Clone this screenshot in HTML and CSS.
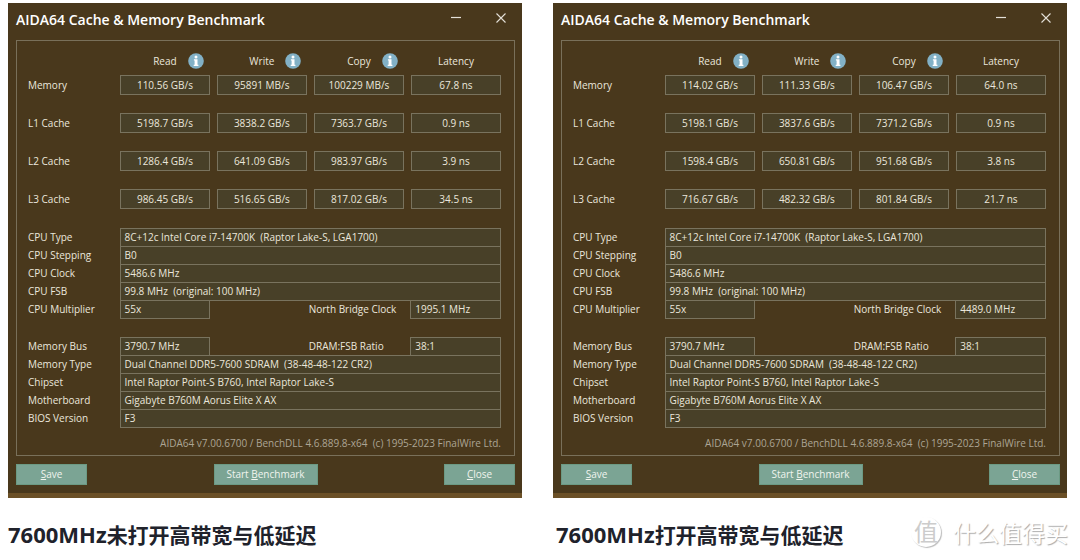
FILE: index.html
```html
<!DOCTYPE html>
<html lang="zh-CN">
<head>
<meta charset="utf-8">
<title>AIDA64 Cache &amp; Memory Benchmark</title>
<link rel="stylesheet" href="styles.css">
</head>
<body>
<svg class="defs" aria-hidden="true">
  <symbol id="info" viewBox="0 0 16 16">
    <circle cx="8" cy="8" r="7.8" fill="#82b1c6"/>
    <circle cx="8" cy="3.9" r="1.5" fill="#fff"/>
    <path d="M5.9 6.3h3.6v5.4h.9v1.3H5.7v-1.3h.9V7.6h-.7z" fill="#fff"/>
  </symbol>
  <symbol id="min" viewBox="0 0 12 12"><path d="M1 5.5h10" stroke="#e4e0d8" stroke-width="1.2"/></symbol>
  <symbol id="close" viewBox="0 0 12 12"><path d="M1.5 1.5l9 9M10.5 1.5l-9 9" stroke="#e4e0d8" stroke-width="1.1"/></symbol>
</svg>
<main class="compare">
  <figure class="result">
    <section class="window">
      <header class="titlebar">
        <h1 class="title">AIDA64 Cache &amp; Memory Benchmark</h1>
        <button class="sysbtn" aria-label="Minimize"><svg><use href="#min"/></svg></button>
        <button class="sysbtn" aria-label="Close"><svg><use href="#close"/></svg></button>
      </header>
      <div class="panel">
        <table class="bench">
          <colgroup><col class="c-label"><col class="c-first"><col><col><col></colgroup>
          <thead><tr><td></td>
            <th><div class="head"><span>Read</span><button class="info" aria-label="About Read"><svg><use href="#info"/></svg></button></div></th>
            <th><div class="head"><span>Write</span><button class="info" aria-label="About Write"><svg><use href="#info"/></svg></button></div></th>
            <th><div class="head"><span>Copy</span><button class="info" aria-label="About Copy"><svg><use href="#info"/></svg></button></div></th>
            <th><div class="head"><span>Latency</span></div></th></tr></thead>
          <tbody>
            <tr><th>Memory</th><td><div class="box">110.56 GB/s</div></td><td><div class="box">95891 MB/s</div></td><td><div class="box">100229 MB/s</div></td><td><div class="box">67.8 ns</div></td></tr>
            <tr><th>L1 Cache</th><td><div class="box">5198.7 GB/s</div></td><td><div class="box">3838.2 GB/s</div></td><td><div class="box">7363.7 GB/s</div></td><td><div class="box">0.9 ns</div></td></tr>
            <tr><th>L2 Cache</th><td><div class="box">1286.4 GB/s</div></td><td><div class="box">641.09 GB/s</div></td><td><div class="box">983.97 GB/s</div></td><td><div class="box">3.9 ns</div></td></tr>
            <tr><th>L3 Cache</th><td><div class="box">986.45 GB/s</div></td><td><div class="box">516.65 GB/s</div></td><td><div class="box">817.02 GB/s</div></td><td><div class="box">34.5 ns</div></td></tr>
          </tbody>
        </table>
        <table class="spec">
          <colgroup><col class="c-label"><col class="c-value"><col><col class="c-mid"><col class="c-value"></colgroup>
          <tbody>
            <tr><th>CPU Type</th><td class="v" colspan="4">8C+12c Intel Core i7-14700K&nbsp; (Raptor Lake-S, LGA1700)</td></tr>
            <tr><th>CPU Stepping</th><td class="v" colspan="4">B0</td></tr>
            <tr><th>CPU Clock</th><td class="v" colspan="4">5486.6 MHz</td></tr>
            <tr><th>CPU FSB</th><td class="v" colspan="4">99.8 MHz&nbsp; (original: 100 MHz)</td></tr>
            <tr><th>CPU Multiplier</th><td class="v">55x</td><td></td><th>North Bridge Clock</th><td class="v">1995.1 MHz</td></tr>
            <tr class="gap"><td colspan="5"></td></tr>
            <tr><th>Memory Bus</th><td class="v">3790.7 MHz</td><td></td><th>DRAM:FSB Ratio</th><td class="v">38:1</td></tr>
            <tr><th>Memory Type</th><td class="v" colspan="4">Dual Channel DDR5-7600 SDRAM&nbsp; (38-48-48-122 CR2)</td></tr>
            <tr><th>Chipset</th><td class="v" colspan="4">Intel Raptor Point-S B760, Intel Raptor Lake-S</td></tr>
            <tr><th>Motherboard</th><td class="v" colspan="4">Gigabyte B760M Aorus Elite X AX</td></tr>
            <tr><th>BIOS Version</th><td class="v" colspan="4">F3</td></tr>
          </tbody>
        </table>
        <p class="version">AIDA64 v7.00.6700 / BenchDLL 4.6.889.8-x64&nbsp; (c) 1995-2023 FinalWire Ltd.</p>
      </div>
      <footer class="actions">
        <button class="btn"><u>S</u>ave</button>
        <button class="btn btn-wide">Start <u>B</u>enchmark</button>
        <button class="btn"><u>C</u>lose</button>
      </footer>
    </section>
    <figcaption class="caption"><span class="latin">7600MHz</span>未打开高带宽与低延迟</figcaption>
  </figure>
  <figure class="result">
    <section class="window">
      <header class="titlebar">
        <h1 class="title">AIDA64 Cache &amp; Memory Benchmark</h1>
        <button class="sysbtn" aria-label="Minimize"><svg><use href="#min"/></svg></button>
        <button class="sysbtn" aria-label="Close"><svg><use href="#close"/></svg></button>
      </header>
      <div class="panel">
        <table class="bench">
          <colgroup><col class="c-label"><col class="c-first"><col><col><col></colgroup>
          <thead><tr><td></td>
            <th><div class="head"><span>Read</span><button class="info" aria-label="About Read"><svg><use href="#info"/></svg></button></div></th>
            <th><div class="head"><span>Write</span><button class="info" aria-label="About Write"><svg><use href="#info"/></svg></button></div></th>
            <th><div class="head"><span>Copy</span><button class="info" aria-label="About Copy"><svg><use href="#info"/></svg></button></div></th>
            <th><div class="head"><span>Latency</span></div></th></tr></thead>
          <tbody>
            <tr><th>Memory</th><td><div class="box">114.02 GB/s</div></td><td><div class="box">111.33 GB/s</div></td><td><div class="box">106.47 GB/s</div></td><td><div class="box">64.0 ns</div></td></tr>
            <tr><th>L1 Cache</th><td><div class="box">5198.1 GB/s</div></td><td><div class="box">3837.6 GB/s</div></td><td><div class="box">7371.2 GB/s</div></td><td><div class="box">0.9 ns</div></td></tr>
            <tr><th>L2 Cache</th><td><div class="box">1598.4 GB/s</div></td><td><div class="box">650.81 GB/s</div></td><td><div class="box">951.68 GB/s</div></td><td><div class="box">3.8 ns</div></td></tr>
            <tr><th>L3 Cache</th><td><div class="box">716.67 GB/s</div></td><td><div class="box">482.32 GB/s</div></td><td><div class="box">801.84 GB/s</div></td><td><div class="box">21.7 ns</div></td></tr>
          </tbody>
        </table>
        <table class="spec">
          <colgroup><col class="c-label"><col class="c-value"><col><col class="c-mid"><col class="c-value"></colgroup>
          <tbody>
            <tr><th>CPU Type</th><td class="v" colspan="4">8C+12c Intel Core i7-14700K&nbsp; (Raptor Lake-S, LGA1700)</td></tr>
            <tr><th>CPU Stepping</th><td class="v" colspan="4">B0</td></tr>
            <tr><th>CPU Clock</th><td class="v" colspan="4">5486.6 MHz</td></tr>
            <tr><th>CPU FSB</th><td class="v" colspan="4">99.8 MHz&nbsp; (original: 100 MHz)</td></tr>
            <tr><th>CPU Multiplier</th><td class="v">55x</td><td></td><th>North Bridge Clock</th><td class="v">4489.0 MHz</td></tr>
            <tr class="gap"><td colspan="5"></td></tr>
            <tr><th>Memory Bus</th><td class="v">3790.7 MHz</td><td></td><th>DRAM:FSB Ratio</th><td class="v">38:1</td></tr>
            <tr><th>Memory Type</th><td class="v" colspan="4">Dual Channel DDR5-7600 SDRAM&nbsp; (38-48-48-122 CR2)</td></tr>
            <tr><th>Chipset</th><td class="v" colspan="4">Intel Raptor Point-S B760, Intel Raptor Lake-S</td></tr>
            <tr><th>Motherboard</th><td class="v" colspan="4">Gigabyte B760M Aorus Elite X AX</td></tr>
            <tr><th>BIOS Version</th><td class="v" colspan="4">F3</td></tr>
          </tbody>
        </table>
        <p class="version">AIDA64 v7.00.6700 / BenchDLL 4.6.889.8-x64&nbsp; (c) 1995-2023 FinalWire Ltd.</p>
      </div>
      <footer class="actions">
        <button class="btn"><u>S</u>ave</button>
        <button class="btn btn-wide">Start <u>B</u>enchmark</button>
        <button class="btn"><u>C</u>lose</button>
      </footer>
    </section>
    <figcaption class="caption caption-inset"><span class="latin">7600MHz</span>打开高带宽与低延迟</figcaption>
  </figure>
</main>
<div class="watermark"><span class="seal">值</span><span>什么值得买</span></div>
</body>
</html>
```
FILE: styles.css
```css
* { box-sizing: border-box; }
body {
  margin: 0;
  background: #fff;
  font-family: "Open Sans", "Noto Sans CJK SC", sans-serif;
  font-size: 10px;
  line-height: 16px;
}
button { margin: 0; padding: 0; border: 0; background: none; font: inherit; color: inherit; }
svg { display: block; width: 100%; height: 100%; }
.defs { display: none; }
.compare {
  display: grid;
  grid-template-columns: 1fr 1fr;
  gap: 31px;
  padding: 3px 13px 0 8px;
}
.result { margin: 0; }
.window {
  padding: 0 7px 8px 8px;
  background: #49381c;
  color: #ebe7dc;
  border-bottom: 5px solid #6b5027;
}
.titlebar { display: flex; align-items: center; height: 37px; padding: 0 8px 4px 0; }
.title { flex: 1; margin: 0; font-size: 14px; line-height: 20px; font-weight: 600; color: #fff; }
.sysbtn { width: 12px; height: 12px; margin-left: 33px; }
.sysbtn svg { margin-top: -3px; }
.panel { padding: 12px 13px 4px 11px; border: 1px solid #79705a; }
table { width: 100%; table-layout: fixed; border-collapse: collapse; }
th { font-weight: 400; text-align: left; }
th, td { padding: 0; white-space: nowrap; }
.c-label { width: 92px; }
.c-first, .c-value { width: 19%; }
.c-mid { width: 102px; }
.head { display: grid; grid-template-columns: 1fr auto 1fr; align-items: center; height: 16px; }
.head span { grid-column: 2; }
.info { justify-self: end; width: 16px; height: 16px; margin-right: 6px; }
.bench th + th, .bench td + td { padding-left: 7px; }
.bench thead th:nth-child(2), .bench tbody td:nth-child(2) { padding-left: 0; }
.bench tbody tr { height: 38px; }
.bench tbody th, .bench tbody td { padding-top: 6px; vertical-align: top; line-height: 20px; }
.bench .box {
  height: 20px;
  border: 1px solid #79735e;
  background: #484028;
  line-height: 18px;
  text-align: center;
}
.spec { margin-top: 7px; }
.spec tr { height: 18px; }
.spec .gap { height: 19px; }
.spec th, .spec td { line-height: 17px; }
.spec .v { padding-left: 4px; border: 1px solid #79735e; background: #484028; }
.version { margin: 7px 0 0; text-align: right; color: #aca594; }
.actions { display: flex; justify-content: space-between; margin-top: 8px; }
.btn { width: 71px; height: 21px; background: #7ba494; border: 1px solid #6c9a84; color: #f0f4ee; line-height: 19px; }
.btn-wide { width: 104px; }
.caption { padding-top: 20px; font-size: 21px; line-height: 32px; font-weight: 700; color: #20222b; }
.caption-inset { padding-left: 3px; }
.latin { font-size: 22px; }
.watermark {
  position: absolute;
  right: 12px;
  bottom: 12px;
  display: flex;
  align-items: center;
  gap: 12px;
  font-family: "Noto Sans CJK SC", sans-serif;
  font-size: 23px;
  line-height: 32px;
  color: #fff;
  text-shadow: 1px 1px 1px #aaa;
}
.seal {
  width: 30px;
  height: 30px;
  border-radius: 50%;
  font-size: 24px;
  line-height: 28px;
  text-align: center;
  color: #ccc;
  text-shadow: none;
  box-shadow: 1px 1px 1px #bbb;
}
```
